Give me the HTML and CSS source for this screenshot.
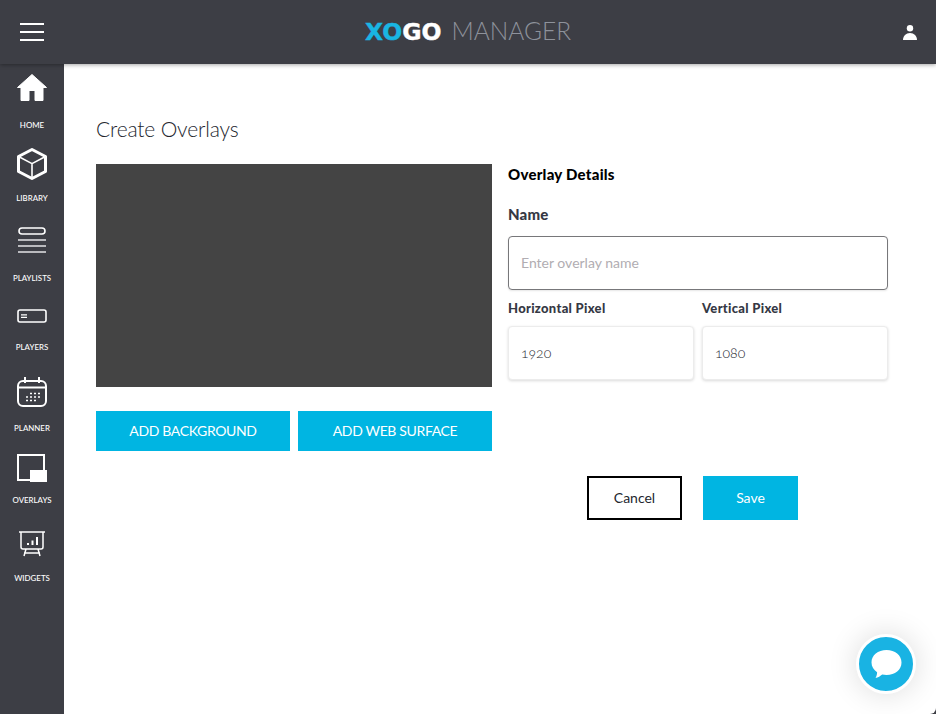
FILE: index.html
```html
<!DOCTYPE html>
<html lang="en">
<head>
<meta charset="utf-8">
<title>XOGO Manager</title>
<link rel="stylesheet" href="styles.css">
</head>
<body>
<div class="app">
  <header class="topbar">
    <button class="menu-btn" aria-label="Menu"><span></span><span></span><span></span></button>
    <div class="logo"><span class="logo-xo">XO</span><span class="logo-go">GO</span><span class="logo-name">MANAGER</span></div>
    <svg class="user-icon" viewBox="0 0 14 15" width="14" height="15" aria-hidden="true"><circle cx="7" cy="3.200" r="3.200" fill="#fff"/><path d="M0 15c0-4 3-7 7-7s7 3 7 7z" fill="#fff"/></svg>
  </header>
  <div class="body">
    <nav class="sidebar">
      <a class="nav-item nav-home">
        <svg viewBox="0 0 30 27" width="30" height="27"><path d="M15 .5 29.500 13.500H26V26.500H18V16.500H12V26.500H4V13.500H.5z" fill="#fff" stroke="#fff" stroke-width="1" stroke-linejoin="round"/></svg>
        <span>HOME</span>
      </a>
      <a class="nav-item nav-library">
        <svg viewBox="0 0 30 32" width="30" height="32" fill="none" stroke="#fff" stroke-linejoin="round"><path d="M15 1.500 28.500 8.500v15L15 30.500 1.500 23.500v-15z" stroke-width="3"/><path d="M1.500 8.500 15 15.600 28.500 8.500M15 15.600v15" stroke-width="1.600"/></svg>
        <span>LIBRARY</span>
      </a>
      <a class="nav-item nav-playlists">
        <svg viewBox="0 0 28 26" width="28" height="26" fill="none" stroke="#fff"><rect x="1" y="1" width="26" height="6" rx="3" stroke-width="1.600"/><path d="M0 13h28M0 19h28M0 25h28" stroke-width="1.600" stroke="#e4e4e6"/></svg>
        <span>PLAYLISTS</span>
      </a>
      <a class="nav-item nav-players">
        <svg viewBox="0 0 30 14" width="30" height="14" fill="none" stroke="#fff"><rect x="1" y="1" width="28" height="12" rx="2" stroke-width="1.600"/><path d="M4 5.800h6M4 8.400h6" stroke-width="1.300"/></svg>
        <span>PLAYERS</span>
      </a>
      <a class="nav-item nav-planner">
        <svg viewBox="0 0 30 30" width="30" height="30" fill="none" stroke="#fff"><rect x="1" y="4" width="28" height="25" rx="5" stroke-width="2"/><path d="M1 10.500h28M8 0v6M22 0v6" stroke-width="2"/><path d="M13 16.500h2M17 16.500h2M21 16.500h2M9 20h2M13 20h2M17 20h2M21 20h2M9 23.500h2M13 23.500h2M17 23.500h2" stroke-width="1.500"/></svg>
        <span>PLANNER</span>
      </a>
      <a class="nav-item nav-overlays">
        <svg viewBox="0 0 30 28" width="30" height="28"><path d="M1 1h26v25H1z" fill="none" stroke="#fff" stroke-width="2"/><rect x="13" y="16" width="17" height="12" fill="#fff"/></svg>
        <span>OVERLAYS</span>
      </a>
      <a class="nav-item nav-widgets">
        <svg viewBox="0 0 26 26" width="26" height="26" fill="none" stroke="#fff" stroke-width="1.500"><path d="M0 1h26M2 1v15a2 2 0 0 0 2 2h18a2 2 0 0 0 2-2V1M7 18l-2 7M19 18l2 7M5 22h16"/><path d="M9 14v-2M13.500 14V9.500M18 14V6" stroke-width="2"/></svg>
        <span>WIDGETS</span>
      </a>
    </nav>
    <main class="main">
      <h1 class="page-title">Create Overlays</h1>
      <div class="columns">
        <section class="preview-col">
          <div class="preview"></div>
          <div class="preview-actions">
            <button class="btn btn-primary btn-wide">ADD BACKGROUND</button>
            <button class="btn btn-primary btn-wide">ADD WEB SURFACE</button>
          </div>
        </section>
        <section class="details-col">
          <h2 class="details-title">Overlay Details</h2>
          <label class="field-label field-label-name" for="name">Name</label>
          <input class="input input-name" id="name" placeholder="Enter overlay name">
          <div class="pixel-row">
            <div class="pixel-field">
              <label class="field-label field-label-small" for="hp">Horizontal Pixel</label>
              <input class="input input-pixel" id="hp" value="1920">
            </div>
            <div class="pixel-field">
              <label class="field-label field-label-small" for="vp">Vertical Pixel</label>
              <input class="input input-pixel" id="vp" value="1080">
            </div>
          </div>
          <div class="form-actions">
            <button class="btn btn-outline">Cancel</button>
            <button class="btn btn-primary btn-save">Save</button>
          </div>
        </section>
      </div>
    </main>
  </div>
  <button class="chat-btn" aria-label="Chat">
    <svg viewBox="0 0 30 28" width="31" height="28"><path d="M15 0C23.500 0 30 5 30 12.500S23.500 25 15 25c-1.500 0-3-.2-4.300-.5C9 26 6.500 27.600 4 28c1-1.500 1.600-3.500 1.600-5.700C2.200 20 0 16.500 0 12.500 0 5 6.500 0 15 0z" fill="#fff"/></svg>
  </button>
</div>
</body>
</html>
```
FILE: styles.css
```css
* { box-sizing: border-box; }
html, body { margin: 0; height: 100%; }
body { font-family: Lato, "Liberation Sans", sans-serif; background: #fff; overflow: hidden; }
.app { height: 714px; display: flex; flex-direction: column; position: relative; overflow: hidden; background: #3d3e45; }

.topbar { height: 64px; flex: none; background: #3d3e45; display: flex; align-items: center; justify-content: center; position: relative; z-index: 2; box-shadow: 0 1px 4px rgba(0,0,0,.35); }
.menu-btn { position: absolute; left: 20px; top: 23px; width: 24px; height: 18px; padding: 0; border: 0; background: none; display: flex; flex-direction: column; justify-content: space-between; }
.menu-btn span { display: block; height: 2px; background: #fff; }
.user-icon { position: absolute; right: 19px; top: 25px; }

.logo { display: flex; align-items: baseline; line-height: 1; padding-bottom: 1px; }
.logo-xo, .logo-go { font-family: "DejaVu Sans", sans-serif; font-size: 23.500px; font-weight: 700; -webkit-text-stroke: .4px currentColor; }
.logo-xo { color: #19b5e3; }
.logo-go { color: #fff; }
.logo-name { margin-left: 10px; font-size: 24.500px; font-weight: 300; color: #8e929b; }

.body { flex: 1; display: flex; min-height: 0; }
.sidebar { width: 64px; flex: none; background: #3d3e45; display: flex; flex-direction: column; align-items: center; }
.nav-item { display: flex; flex-direction: column; align-items: center; color: #fff; font-size: 7.900px; font-weight: 500; line-height: 10px; }
.nav-item svg { display: block; }
.nav-home { padding-top: 10px; }
.nav-home svg { margin-bottom: 19px; }
.nav-library { padding-top: 18px; }
.nav-library svg { margin-bottom: 13px; }
.nav-playlists { padding-top: 24px; }
.nav-playlists svg { margin-bottom: 20px; }
.nav-players { padding-top: 26px; }
.nav-players svg { margin-bottom: 19px; }
.nav-planner { padding-top: 25px; }
.nav-planner svg { margin-bottom: 16px; }
.nav-overlays { padding-top: 21px; }
.nav-overlays svg { margin-bottom: 13px; }
.nav-widgets { padding-top: 26px; }
.nav-widgets svg { margin-bottom: 16px; }

.main { flex: 1; padding: 51px 48px 0 32px; min-width: 0; background: #fff; border-bottom-right-radius: 6px; }
.page-title { margin: 0 0 21px; font-size: 21px; line-height: 28px; font-weight: 300; letter-spacing: -.15px; color: #23262e; }
.columns { display: flex; gap: 16px; }
.preview-col { width: 396px; flex: none; }
.preview { height: 223px; background: #444; }
.preview-actions { display: flex; gap: 8px; margin-top: 24px; }
.details-col { flex: 1; min-width: 0; }
.details-title { margin: 0; font-size: 15px; line-height: 20px; font-weight: 900; letter-spacing: .25px; color: #000; }
.field-label { display: block; font-weight: 900; color: #353844; }
.field-label-name { margin-top: 19px; font-size: 15px; line-height: 22px; letter-spacing: .2px; }
.field-label-small { font-size: 13px; line-height: 20px; letter-spacing: .3px; }

.input { display: block; width: 100%; height: 54px; padding: 0 12px 2px; background: #fff; font-family: inherit; font-size: 14px; font-weight: 300; color: #23262e; outline: none; border-radius: 4px; }
.input::placeholder { color: #b1adb2; opacity: 1; font-weight: 400; }
.input-name { margin-top: 11px; border: 1px solid #77777a; box-shadow: 0 1px 2px rgba(0,0,0,.1); }
.input-pixel { margin-top: 8px; border: 1px solid #ececec; box-shadow: 0 1px 3px rgba(0,0,0,.15); font-variant-numeric: oldstyle-nums; }
.pixel-row { display: flex; gap: 8px; margin-top: 8px; }
.pixel-field { flex: 1; min-width: 0; }

.btn { font-family: inherit; font-size: 14px; cursor: pointer; border-radius: 0; padding: 0 0 2px; }
.btn-primary { border: 0; background: #00b5e2; color: #fff; }
.btn-wide { flex: 1; height: 40px; font-weight: 400; letter-spacing: -.35px; }
.form-actions { display: flex; gap: 21px; margin: 96px 0 0 79px; }
.btn-outline { width: 95px; height: 44px; background: #fff; border: 2px solid #000; color: #23262e; }
.btn-save { width: 95px; height: 44px; }

.chat-btn { position: absolute; left: 856px; top: 634px; width: 60px; height: 60px; padding: 0; border-radius: 50%; border: 3px solid #fff; background: #19b3e3; display: flex; align-items: center; justify-content: center; box-shadow: 0 0 30px rgba(0,0,0,.14); }
```
